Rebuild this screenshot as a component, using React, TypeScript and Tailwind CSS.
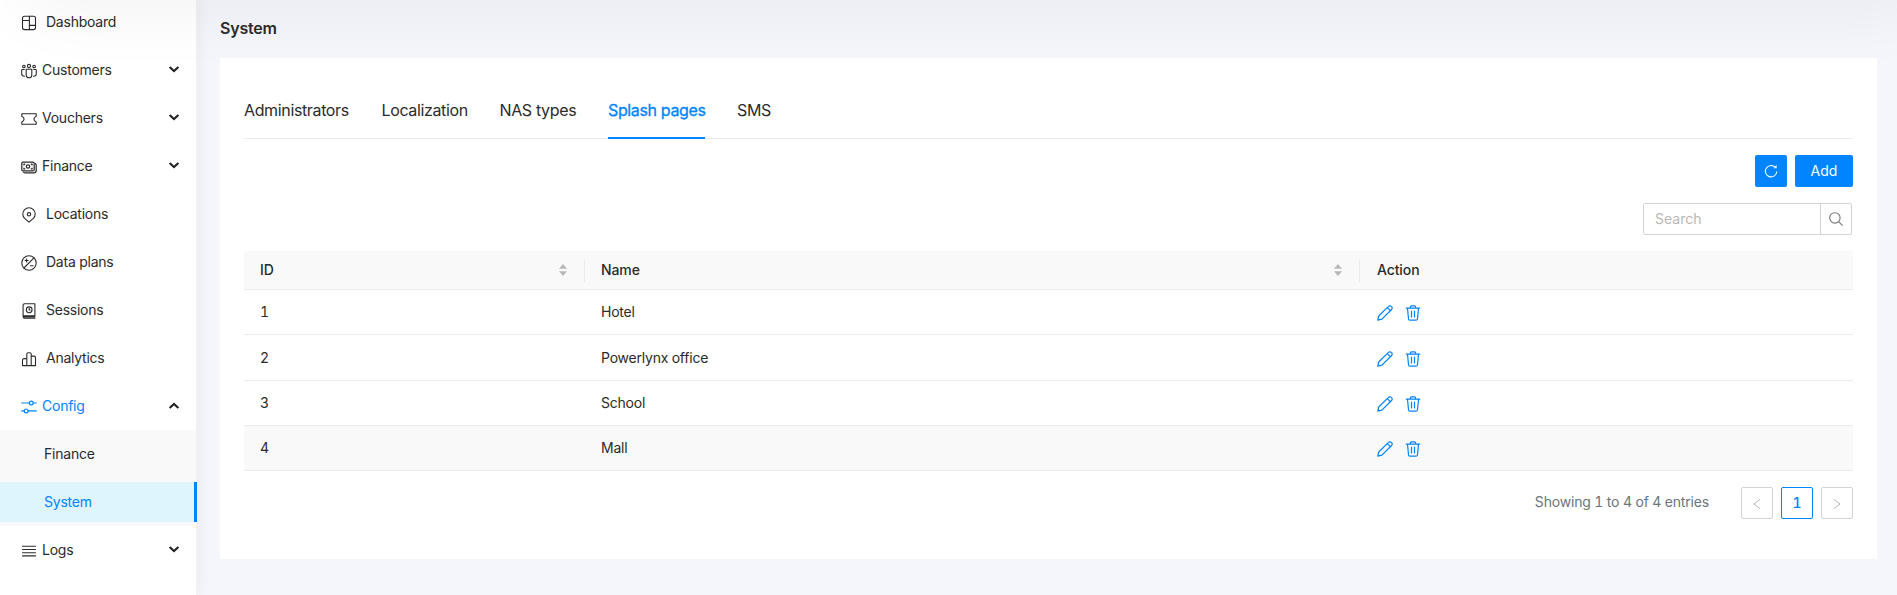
import React from "react";

type IconProps = { children: React.ReactNode; className?: string; sw?: number };

function Glyph({ children, className = "", sw = 1.1 }: IconProps) {
  return (
    <svg viewBox="0 0 16 16" fill="none" stroke="currentColor" strokeWidth={sw} strokeLinecap="round" strokeLinejoin="round" className={`size-4 shrink-0 ${className}`}>
      {children}
    </svg>
  );
}

const icons: Record<string, React.ReactNode> = {
  dashboard: (
    <Glyph>
      <rect x="1.5" y="1.2" width="13" height="13.4" rx="2" />
      <path d="M8.400 1.200v13.400M1.500 5.500h6.900M8.400 10.400h6.100" />
    </Glyph>
  ),
  customers: (
    <Glyph>
      <circle cx="8" cy="3" r="1.6" />
      <circle cx="2.9" cy="3.500" r="1.300" />
      <circle cx="13.100" cy="3.500" r="1.300" />
      <path d="M5.200 6.300h5.600v5.700a2.800 2.800 0 0 1-5.600 0zM3.300 6.500H1.500c-.5 0-.8.300-.8.800v3.400c0 1.500 1 2.500 2.800 2.500M12.700 6.500h1.800c.5 0 .8.300.8.800v3.400c0 1.500-1 2.500-2.800 2.500" />
    </Glyph>
  ),
  vouchers: (
    <Glyph>
      <path d="M.8 2.800h14.400v2.400c-1.500.6-2.300 1.500-2.300 2.900s.8 2.300 2.300 2.900v2.300H.8V11c1.500-.6 2.300-1.500 2.300-2.900S2.300 5.800.8 5.200z" />
    </Glyph>
  ),
  finance: (
    <Glyph sw={1.25}>
      <rect x=".8" y="3.200" width="12.400" height="8.700" rx="1.200" />
      <circle cx="7" cy="7.500" r="1.700" />
      <path d="M2.900 5.900v-.7h.9M10.200 5.200h.9v.7M2.900 9.200v.7h.9M10.200 9.900h.9v-.7M14.300 4.600c.6.400.9.900.9 1.700v5.100c0 1.500-.9 2.400-2.300 2.400H4.500c-.9 0-1.500-.2-2-.7" />
    </Glyph>
  ),
  locations: (
    <Glyph>
      <path d="M8 15.200 3.600 11.300a6.200 6.200 0 1 1 8.800 0z" />
      <circle cx="8" cy="7.300" r="1.700" />
    </Glyph>
  ),
  plans: (
    <Glyph>
      <circle cx="8" cy="8" r="7.200" />
      <path d="M2.900 13 13 2.900M5.600 4v3M4.100 5.500h3M9.400 10.700h2.800" />
    </Glyph>
  ),
  sessions: (
    <Glyph>
      <path d="M13.900 12.800V.8H3.700C2.700.8 2.100 1.400 2.100 2.300v11.200c0 1 .6 1.700 1.600 1.700h10.200M2.300 12.900h11.600M3 14h10.900" />
      <circle cx="8.200" cy="6.800" r="2.900" />
      <path d="M8.200 5.300v1.700h1" />
    </Glyph>
  ),
  analytics: (
    <Glyph>
      <path d="M5.800 14.600V3.100c0-.9.400-1.300 1.300-1.300h1.800c.9 0 1.300.4 1.300 1.300v11.500M5.800 7.600H3.100c-.9 0-1.600.7-1.600 1.600v5.400h13V6.600c0-.9-.6-1.500-1.500-1.500h-2.800" />
    </Glyph>
  ),
  config: (
    <Glyph sw={1.2}>
      <path d="M.7 4h7.600M12.300 4h3M.7 11.900h2.600M7.200 11.900h8.100" />
      <circle cx="10.300" cy="4" r="1.900" />
      <circle cx="5.200" cy="11.900" r="1.900" />
    </Glyph>
  ),
  logs: (
    <Glyph>
      <path d="M1.500 3.300h13M1.500 6.500h13M1.500 9.700h13M1.500 12.900h13" />
    </Glyph>
  ),
};

function Chevron({ up = false }: { up?: boolean }) {
  return (
    <svg viewBox="0 0 12 12" className="ml-auto mr-4 size-3 -translate-y-px" fill="none" stroke="#222" strokeWidth="2.100">
      <path d={up ? "M1.600 9 6 5l4.400 4" : "M1.600 4 6 8l4.400-4"} />
    </svg>
  );
}

type Item = { icon: string; label: string; open?: boolean; group?: boolean };

function MenuItem({ icon, label, group, open }: Item) {
  return (
    <div className={`mb-2 flex h-10 items-center pl-[21px] text-sm ${open ? "text-[#0084ff]" : "text-[#2b2b2b]"}`}>
      <span className="translate-y-px">{icons[icon]}</span>
      <span className={group ? "ml-[5px] tracking-[-0.24px]" : "ml-[9px] tracking-[-0.24px]"}>{label}</span>
      {group && <Chevron up={open} />}
    </div>
  );
}

const mainItems: Item[] = [
  { icon: "dashboard", label: "Dashboard" },
  { icon: "customers", label: "Customers", group: true },
  { icon: "vouchers", label: "Vouchers", group: true },
  { icon: "finance", label: "Finance", group: true },
  { icon: "locations", label: "Locations" },
  { icon: "plans", label: "Data plans" },
  { icon: "sessions", label: "Sessions" },
  { icon: "analytics", label: "Analytics" },
];

function Sidebar() {
  return (
    <aside className="relative z-10 w-[196px] shrink-0 bg-white pt-0.5 shadow-[2px_0_16px_rgba(30,40,80,0.05)]">
      {mainItems.map((item) => (
        <MenuItem key={item.label} {...item} />
      ))}
      <div className="h-11">
        <MenuItem icon="config" label="Config" group open />
      </div>
      <div className="h-24 bg-[#f9f9f9] pt-1 text-sm tracking-[-0.22px]">
        <div className="mb-2 flex h-10 items-center pl-11 text-[#2b2b2b]">Finance</div>
        <div className="-mr-px flex h-10 items-center border-r-[3px] border-[#0084ff] bg-[#dff5fe] pl-11 text-[#0084ff]">System</div>
      </div>
      <div className="pt-1">
        <MenuItem icon="logs" label="Logs" group />
      </div>
    </aside>
  );
}

const tabs = [
  { label: "Administrators", box: "w-[105.5px]" },
  { label: "Localization", box: "w-[86px]" },
  { label: "NAS types", box: "w-[76.5px]" },
  { label: "Splash pages", box: "w-[97px]", active: true },
  { label: "SMS", box: "w-[34px]" },
];

function Sorter() {
  return (
    <svg viewBox="0 0 8 12" className="h-3 w-2" fill="#b8b8b8">
      <path d="M4 0 8 4.800H0zM4 12 8 7.200H0z" />
    </svg>
  );
}

function Pencil() {
  return (
    <Glyph sw={1.200}>
      <path d="M.8 15.200 1.700 11 11.500 1.400a1.900 1.900 0 0 1 2.800 0l.3.300a1.900 1.900 0 0 1 0 2.800L4.900 14.200zM10.300 2.600l3.200 3.100" />
    </Glyph>
  );
}

function Trash() {
  return (
    <Glyph sw={1.200}>
      <path d="M1.300 3.200h13.400M5.400 3.200V1.900C5.400 1.200 5.900.8 6.500.8h3c.6 0 1.100.4 1.100 1.100v1.300M2.500 3.200l1 10.600c.1.900.6 1.400 1.500 1.400h6c.9 0 1.400-.5 1.500-1.400l1-10.600M6.500 6v6M9.500 6v6" />
    </Glyph>
  );
}

const rows = [
  { id: 1, name: "Hotel", box: "h-[45px]" },
  { id: 2, name: "Powerlynx office", box: "h-[46px]" },
  { id: 3, name: "School", box: "h-[45px]" },
  { id: 4, name: "Mall", box: "h-[45px] bg-[#f9f9f9]" },
];

const grid = "grid grid-cols-[341px_775px_1fr] items-center";

export default function App() {
  return (
    <div className="relative flex h-[595px] w-[1897px] overflow-hidden bg-[#f4f6fb] font-['Inter',sans-serif] text-[#2b2b2b]">
      <Sidebar />
      <main className="flex-1 pl-6 pr-5">
        <h1 className="flex h-[58px] items-center text-base font-semibold tracking-[-0.2px]">
          <span className="-translate-y-px">System</span>
        </h1>
        <section className="h-[501px] bg-white px-6 pt-6">
          <nav className="flex h-[57px] gap-8 border-b border-[#ebebeb] text-base tracking-[-0.36px]">
            {tabs.map((t) => (
              <div key={t.label} className={`flex h-[57px] items-center whitespace-nowrap ${t.box} ${t.active ? "border-b-2 border-[#0084ff] text-[#0084ff] [-webkit-text-stroke:0.3px_#0084ff]" : "border-b-2 border-transparent"}`}>
                {t.label}
              </div>
            ))}
          </nav>
          <div className="mt-4 flex justify-end gap-2">
            <button className="flex size-8 items-center justify-center rounded-xs bg-[#0084ff] text-white">
              <svg viewBox="0 0 14 14" className="size-3.5" fill="none" stroke="currentColor" strokeWidth="1.100">
                <path d="M12.800 7.500A5.700 5.700 0 1 1 11.200 3.200" />
                <path d="M12.600 1v3.200H9.400z" fill="currentColor" stroke="none" />
              </svg>
            </button>
            <button className="h-8 w-[58px] rounded-xs bg-[#0084ff] text-sm text-white">Add</button>
          </div>
          <div className="mt-4 flex justify-end pr-px">
            <div className="flex h-8 w-[209px] rounded-xs border border-[#d4d4d4] text-sm">
              <div className="flex flex-1 items-center pl-[11px] text-[#b8b8b8]">Search</div>
              <div className="flex w-[31px] items-center justify-center border-l border-[#d4d4d4] text-[#777]">
                <svg viewBox="0 0 14 14" className="size-3.5" fill="none" stroke="currentColor" strokeWidth="1.100">
                  <circle cx="5.900" cy="5.900" r="5.200" />
                  <path d="m9.600 9.600 4 4" />
                </svg>
              </div>
            </div>
          </div>
          <div className="mt-4 text-sm tabular-nums tracking-[-0.22px]">
            <div className={`${grid} h-[39px] rounded-t-xs border-b border-[#ebebeb] bg-[#f9f9f9] font-medium tracking-[-0.1px]`}>
              <div className="flex h-[23px] items-center justify-between border-r border-[#ebebeb] pl-4 pr-[17px]">ID<Sorter /></div>
              <div className="flex h-[23px] items-center justify-between border-r border-[#ebebeb] pl-4 pr-[17px]">Name<Sorter /></div>
              <div className="pl-[17px]">Action</div>
            </div>
            {rows.map((r) => (
              <div key={r.id} className={`${grid} ${r.box} border-b border-[#ebebeb]`}>
                <div className="pl-4">{r.id}</div>
                <div className="pl-4">{r.name}</div>
                <div className="flex translate-y-px gap-3 pl-[17px] text-[#0084ff]"><Pencil /><Trash /></div>
              </div>
            ))}
          </div>
          <div className="mt-4 flex justify-end gap-2 text-sm tabular-nums">
            <div className="mr-6 flex h-8 items-center pb-0.5 tracking-[-0.17px] text-[#6c757d]">Showing 1 to 4 of 4 entries</div>
            <div className="flex size-8 items-center justify-center rounded-xs border border-[#d4d4d4] text-[#b8b8b8]">
              <svg viewBox="0 0 8 10" className="h-2.5 w-2 translate-y-px" fill="none" stroke="currentColor"><path d="M7 .5.800 5 7 9.500" /></svg>
            </div>
            <div className="flex size-8 items-center justify-center rounded-xs border border-[#0084ff] font-medium text-[#0084ff]">1</div>
            <div className="flex size-8 items-center justify-center rounded-xs border border-[#d4d4d4] text-[#b8b8b8]">
              <svg viewBox="0 0 8 10" className="h-2.5 w-2 translate-y-px" fill="none" stroke="currentColor"><path d="M1 .5 7.200 5 1 9.500" /></svg>
            </div>
          </div>
        </section>
      </main>
      <div className="pointer-events-none absolute -top-16 left-0 z-20 h-16 w-full shadow-[30px_0_80px_rgba(0,0,0,0.07)]" />
    </div>
  );
}
